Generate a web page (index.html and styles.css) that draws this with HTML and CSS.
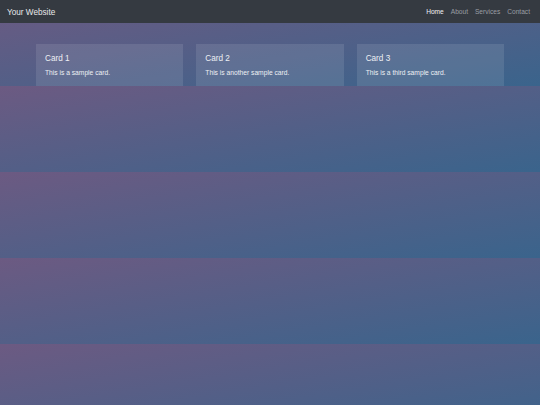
FILE: index.html
```html
<!DOCTYPE html>
<html lang="en">
<head>
<meta charset="utf-8">
<title>Your Website</title>
<link rel="stylesheet" href="styles.css">
</head>
<body>
<nav class="navbar">
  <div class="brand">Your Website</div>
  <ul class="nav-links">
    <li><a class="active" href="#">Home</a></li>
    <li><a href="#">About</a></li>
    <li><a href="#">Services</a></li>
    <li><a href="#">Contact</a></li>
  </ul>
</nav>
<main class="content">
  <div class="card">
    <h3 class="card-title">Card 1</h3>
    <p class="card-text">This is a sample card.</p>
  </div>
  <div class="card">
    <h3 class="card-title">Card 2</h3>
    <p class="card-text">This is another sample card.</p>
  </div>
  <div class="card">
    <h3 class="card-title">Card 3</h3>
    <p class="card-text">This is a third sample card.</p>
  </div>
</main>
</body>
</html>
```
FILE: styles.css
```css
body {
  margin: 0;
  font-family: "Liberation Sans", Arial, sans-serif;
  background: linear-gradient(to bottom right, #6c5a82, #3a648c);
  color: #eef0f4;
}

.navbar {
  height: 23px;
  background: #353a41;
  display: flex;
  align-items: center;
  justify-content: space-between;
  padding: 0 10px 0 7px;
}

.brand {
  font-size: 8.2px;
  line-height: 10px;
  padding-top: 2px;
  color: #e8e8ea;
}

.nav-links {
  list-style: none;
  margin: 0;
  padding: 0;
  display: flex;
  gap: 7px;
  font-size: 6.6px;
  line-height: 8px;
}

.nav-links a {
  color: #9a9ea4;
  text-decoration: none;
}

.nav-links a.active {
  color: #f2f2f4;
}

.content {
  padding: 21px 36px 0;
  display: grid;
  grid-template-columns: repeat(3, 1fr);
  gap: 13px;
}

.card {
  background: rgba(255, 255, 255, 0.1);
  padding: 10px 9px 9px;
}

.card-title {
  margin: 0 0 4px;
  font-size: 8.2px;
  line-height: 10px;
  font-weight: normal;
}

.card-text {
  margin: 0;
  font-size: 6.7px;
  line-height: 9px;
}
```
